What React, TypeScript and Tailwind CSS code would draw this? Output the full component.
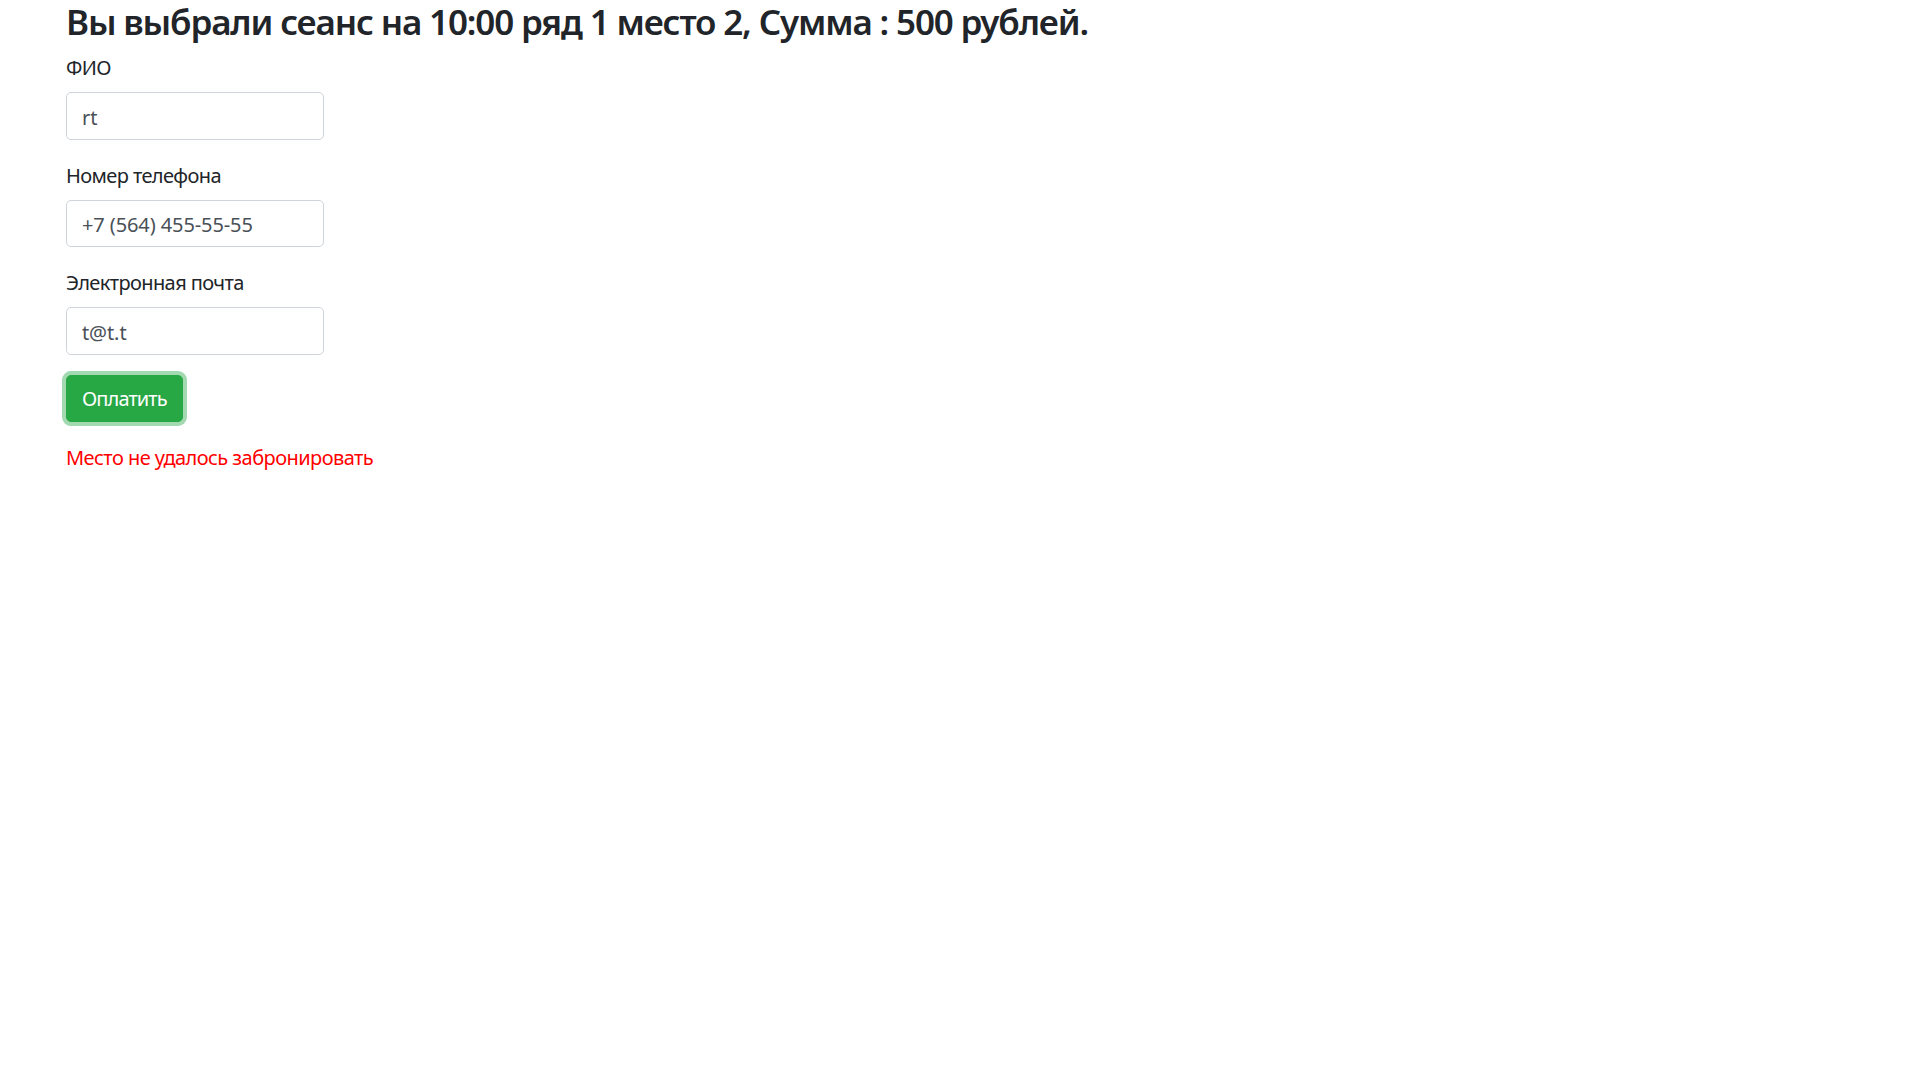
import React from "react";

const font = { fontFamily: '"Noto Sans", "Open Sans", sans-serif' };

function Field({ label, value }: { label: string; value: string }) {
  return (
    <div className="mb-[20px]">
      <label className="block pt-[1px] mb-[9px] text-[20px] leading-[30px] tracking-[-0.6px] text-[#212529]">{label}</label>
      <input
        readOnly
        value={value}
        className="block w-[258px] h-[47.5px] px-[15px] pt-[9px] pb-[6px] text-[20px] leading-[30px] tracking-[-0.1px] text-[#495057] bg-white border border-[#ced4da] rounded-[5px] outline-none"
      />
    </div>
  );
}

export default function App() {
  return (
    <div className="min-h-screen bg-white pl-[66px]" style={font}>
      <h3 className="pt-[1px] text-[35px] leading-[42px] font-semibold tracking-[-1.15px] text-[#212529] mb-[9px] m-0">
        Вы выбрали сеанс на 10:00 ряд 1 место 2, Сумма : 500 рублей.
      </h3>
      <Field label="ФИО" value="rt" />
      <Field label="Номер телефона" value="+7 (564) 455-55-55" />
      <Field label="Электронная почта" value="t@t.t" />
      <button className="block h-[47.5px] px-[15px] pt-[1px] text-[20px] leading-[30px] tracking-[-0.9px] text-white bg-[#28a745] border border-[#28a745] rounded-[5px] shadow-[0_0_0_4px_rgba(72,180,97,0.5)]">
        Оплатить
      </button>
      <p className="mt-[20px] pt-[1px] text-[20px] leading-[30px] tracking-[-0.55px] text-[#ff0000]">Место не удалось забронировать</p>
    </div>
  );
}
